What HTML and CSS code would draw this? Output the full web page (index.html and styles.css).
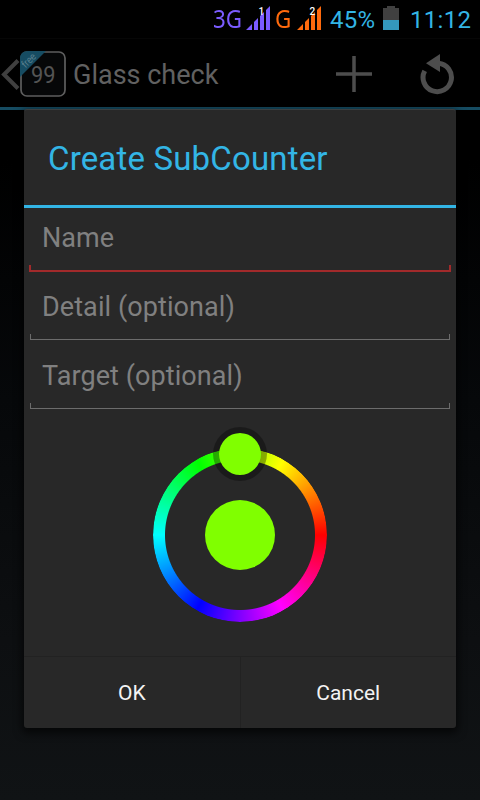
FILE: index.html
```html
<!DOCTYPE html>
<html lang="en">
<head>
<meta charset="utf-8">
<title>Create SubCounter</title>
<link rel="stylesheet" href="styles.css">
</head>
<body>
<div class="screen">
  <header class="status">
    <span class="net net-one">3G</span>
    <svg class="signal signal-one" width="24" height="24" viewBox="0 0 24 24">
      <path fill="#7b5cff" d="M0 24L6 18V24ZM8 16L12 12V24H8ZM14 10L18 6V24H14ZM20 4L24 0V24H20Z"/>
      <text x="12.500" y="8.500">1</text>
    </svg>
    <span class="net net-two">G</span>
    <svg class="signal signal-two" width="24" height="24" viewBox="0 0 24 24">
      <path fill="#ff6a0d" d="M0 24L6 18V24ZM8 16L12 12V24H8ZM14 10L18 6V24H14ZM20 4L24 0V24H20Z"/>
      <text x="12.500" y="8.500">2</text>
    </svg>
    <span class="percent">45%</span>
    <svg class="battery" width="16" height="24" viewBox="0 0 16 24">
      <path fill="#404040" d="M4 0H12V2H16V14H0V2H4Z"/>
      <path fill="#3498bd" d="M0 14H16V24H0Z"/>
    </svg>
    <span class="clock">11:12</span>
  </header>
  <nav class="actionbar">
    <svg class="back" width="20" height="32" viewBox="0 0 20 32"><path d="M18 1.500L4 15.500L18 29.500" fill="none" stroke="#404040" stroke-width="4"/></svg>
    <svg class="appicon" width="46" height="46" viewBox="0 0 46 46">
      <rect x="1" y="1" width="44" height="44" rx="6" fill="#060708" stroke="#5e5e5e" stroke-width="1.700"/>
      <path d="M0 26V8Q0 0 8 0H26Z" fill="#164c62"/>
      <text class="free" transform="translate(5.500 17.500) rotate(-45)" textLength="16" lengthAdjust="spacingAndGlyphs">free</text>
      <text class="count" x="11" y="31.500" textLength="24.500" lengthAdjust="spacingAndGlyphs">99</text>
    </svg>
    <span class="apptitle">Glass check</span>
    <svg class="plus" width="36" height="36" viewBox="0 0 36 36"><path d="M0 18H36M18 0V36" stroke="#4d4d4d" stroke-width="3.500"/></svg>
    <svg class="undo" width="36" height="42" viewBox="0 0 36 42">
      <path d="M4.700 16.800A14.200 14.200 0 1 0 18.500 9.300" fill="none" stroke="#4d4d4d" stroke-width="5"/>
      <path d="M6 9.300L20 0V18Z" fill="#4d4d4d"/>
    </svg>
  </nav>
  <main class="dialog">
    <h1 class="title"><span>Create SubCounter</span></h1>
    <section class="form">
      <div class="field invalid"><span>Name</span></div>
      <div class="field detail"><span>Detail (optional)</span></div>
      <div class="field target"><span>Target (optional)</span></div>
      <div class="picker">
        <div class="ring"></div>
        <div class="center"></div>
        <div class="knob"></div>
      </div>
    </section>
    <footer class="buttons">
      <div class="button">OK</div>
      <div class="button">Cancel</div>
    </footer>
  </main>
</div>
</body>
</html>
```

FILE: styles.css
```css
*, *::before, *::after { box-sizing: border-box; }
body { margin: 0; background: #000; }
.screen {
  width: 480px;
  height: 800px;
  overflow: hidden;
  font-family: Roboto, "Liberation Sans", sans-serif;
  background: linear-gradient(#000 0, #000 160px, #06080a 400px, #0d0f11 640px, #101315 800px);
}
.screen span, .button { white-space: nowrap; }
.status {
  height: 38px;
  display: flex;
  align-items: flex-start;
  background: #000;
  color: #33b5e5;
  font-size: 24px;
  line-height: 40px;
}
.net {
  font-family: "Noto Sans", sans-serif;
  font-size: 26px;
  line-height: 37px;
  transform: scaleX(.86);
  transform-origin: left;
}
.net-one { width: 33px; margin-left: 213px; color: #7b5cff; }
.net-two { width: 22px; margin-left: 5px; color: #ff6a0d; }
.signal { margin-top: 6px; flex: none; overflow: visible; }
.signal text { font: 500 10px Roboto, sans-serif; fill: #fff; }
.percent { width: 53px; margin-left: 9px; letter-spacing: 0.2px; }
.battery { margin-top: 6px; flex: none; }
.clock { margin-left: 11px; letter-spacing: 0.3px; }
.actionbar {
  height: 72px;
  display: flex;
  align-items: flex-start;
  background: #000;
  border-top: 1px solid #060606;
  border-bottom: 3px solid #164c62;
}
.back { margin: 20px 0 0 0; flex: none; }
.appicon { margin-top: 12px; flex: none; overflow: visible; }
.free { font-size: 10.5px; fill: #587f8d; }
.count { font-size: 23.5px; fill: #545454; }
.apptitle { width: 262px; padding-left: 7px; font-size: 27px; line-height: 72px; color: #616161; }
.plus { margin: 17px 0 0 8px; flex: none; }
.undo { margin: 15px 0 0 48px; flex: none; }
.dialog {
  position: relative;
  display: flex;
  flex-direction: column;
  width: 432px;
  height: 619px;
  margin: -1px auto 0;
  background: #282828;
  border-top: 1px solid #3b3f40;
  border-radius: 3px;
  box-shadow: 0 3px 9px 2px rgba(0, 0, 0, .65);
}
.title {
  height: 98px;
  margin: 0;
  padding-left: 24px;
  border-bottom: 3px solid #33b5e5;
  font-size: 33px;
  font-weight: 400;
  line-height: 97px;
  letter-spacing: 0.17px;
  color: #33b5e5;
}
.form { height: 448px; flex: none; }
.field {
  padding: 0 6px;
  color: #808080;
  font-size: 27px;
  letter-spacing: 0.08px;
}
.field span { display: block; padding-left: 12px; }
.field::after {
  content: "";
  display: block;
  height: 6px;
  border: 1px solid #6c6c6c;
  border-top: 0;
}
.invalid { height: 64px; padding: 0 5px; line-height: 60px; }
.invalid span { height: 57px; padding-left: 13px; }
.invalid::after { height: 7px; border: 2px solid #a22a2b; border-top: 0; }
.detail { height: 68px; line-height: 70px; }
.detail span { height: 62px; }
.target { height: 69px; line-height: 72px; }
.target span { height: 63px; }
.picker {
  position: relative;
  display: grid;
  place-items: center;
  width: 174px;
  height: 174px;
  margin: 39px auto 0;
}
.ring, .center { grid-area: 1 / 1; border-radius: 50%; }
.ring {
  width: 174px;
  height: 174px;
  background: conic-gradient(from 90deg, #f00, #f0f, #00f, #0ff, #0f0, #ff0, #f00);
  -webkit-mask: radial-gradient(circle, transparent 74.5px, #000 75.5px);
  mask: radial-gradient(circle, transparent 74.5px, #000 75.5px);
}
.center { width: 70px; height: 70px; background: #80ff00; }
.knob {
  position: absolute;
  left: 60px;
  top: -21px;
  width: 54px;
  height: 54px;
  border: 6px solid rgba(0, 0, 0, .33);
  border-radius: 50%;
  background: #80ff00 padding-box;
}
.buttons { display: flex; height: 72px; flex: none; border-top: 1px solid #222; }
.button { flex: 1; height: 71px; text-align: center; font-size: 21px; line-height: 73px; color: #f3f3f3; }
.button + .button { border-left: 1px solid #222; }
```
